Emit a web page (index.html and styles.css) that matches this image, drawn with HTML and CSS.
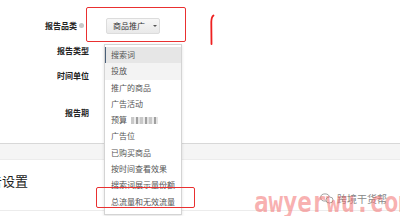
FILE: index.html
```html
<!DOCTYPE html>
<html lang="zh">
<head>
<meta charset="utf-8">
<link rel="stylesheet" href="styles.css">
</head>
<body>
<div class="page">
  <div class="form">
    <div class="row">
      <div class="label first">报告品类<span class="help"></span></div>
      <div class="field"><div class="select">商品推广<span class="caret"></span></div></div>
    </div>
    <div class="row"><div class="label">报告类型</div></div>
    <div class="row"><div class="label">时间单位</div></div>
    <div class="row last"><div class="label">报告期</div></div>
  </div>
  <div class="band"></div>
  <div class="section"><h2 class="title"><span class="cut">告</span>设置</h2></div>

  <ul class="menu">
    <li class="item active">搜索词</li>
    <li class="item hover">投放</li>
    <li class="item">推广的商品</li>
    <li class="item">广告活动</li>
    <li class="item">预算 <span class="mosaic"></span></li>
    <li class="item">广告位</li>
    <li class="item">已购买商品</li>
    <li class="item">按时间查看效果</li>
    <li class="item">搜索词展示量份额</li>
    <li class="item">总流量和无效流量</li>
  </ul>

  <div class="mark mark-top"></div>
  <div class="mark mark-bottom"></div>
  <svg class="stroke" width="8" height="32" viewBox="0 0 8 32"><path d="M3.5 30 L3.3 8 Q3.4 3 5.5 1.5" fill="none" stroke="#ee2020" stroke-width="1.8" stroke-linecap="round"/></svg>

  <div class="wechat">
    <svg class="wx" width="14" height="11" viewBox="0 0 14 11"><ellipse cx="5" cy="4.5" rx="4.3" ry="3.6" fill="none" stroke="#999" stroke-width="0.9"/><ellipse cx="9.5" cy="7" rx="3.6" ry="3" fill="#fff" stroke="#999" stroke-width="0.9"/></svg>
    <span>跨境干货帮</span>
  </div>
  <div class="watermark">awyerwu.com</div>
</div>
</body>
</html>
```
FILE: styles.css
```css
* { box-sizing: border-box; margin: 0; padding: 0; }
html, body { width: 400px; height: 216px; overflow: hidden; background: #fff; }
body { font-family: "Noto Sans CJK SC", "Noto Sans", sans-serif; color: #333; }
.page { position: relative; width: 400px; height: 216px; overflow: hidden; }

.form { height: 143px; padding-top: 13px; }
.row { display: flex; align-items: center; height: 25px; }
.row.last { margin-top: 12px; }
.label { width: 90px; text-align: right; font-size: 8px; font-weight: 700; color: #222; padding-right: 1px; display: flex; justify-content: flex-end; align-items: center; }
.label.first { padding-right: 6px; }
.help { display: inline-block; width: 5px; height: 5px; border-radius: 50%; background: #c8c8c8; margin-left: 2px; }
.field { padding-left: 16px; }
.select { display: flex; align-items: center; width: 54px; height: 16px; padding-left: 6px; font-size: 8px; color: #333; background: linear-gradient(#f7f7f7, #e9e9e9); border: 1px solid #dcdcdc; border-radius: 2px; }
.caret { width: 0; height: 0; border-left: 2px solid transparent; border-right: 2px solid transparent; border-top: 2px solid #555; margin-left: 8px; }

.band { height: 17px; background: #f5f5f5; border-top: 1px solid #d8d8d8; border-bottom: 1px solid #ececec; }
.section { height: 51px; border-bottom: 1px solid #ececec; padding-top: 12px; }
.title { font-size: 13px; font-weight: 400; color: #222; margin-left: -11px; line-height: 18px; }

.menu { position: absolute; left: 104px; top: 44px; width: 78px; list-style: none; background: #fff; border: 1px solid #d4d4d4; box-shadow: 0 1px 3px rgba(0,0,0,0.12); padding: 2px 0 4px; }
.item { height: 16.3px; line-height: 16.3px; font-size: 8px; color: #555; padding-left: 6px; white-space: nowrap; }
.item.active { background: #e6e6e6; box-shadow: inset 1px 0 0 #4a5f78; }
.item.hover { background: #f3f3f3; }
.mosaic { display: inline-block; width: 27px; height: 7px; vertical-align: -1px; margin-left: 2px; background: repeating-linear-gradient(90deg, #bbb 0 3px, #e8e8e8 3px 5px, #888 5px 7px, #ddd 7px 9px); opacity: 0.8; }

.mark { position: absolute; border: 1.5px solid #e93030; border-radius: 2px; }
.mark-top { left: 86px; top: 7px; width: 100px; height: 35px; }
.mark-bottom { left: 96px; top: 187px; width: 99px; height: 21px; }
.stroke { position: absolute; left: 208px; top: 14px; }

.wechat { position: absolute; left: 320px; top: 191px; display: flex; align-items: center; gap: 3px; font-size: 10px; color: #888; }
.watermark { position: absolute; left: 254px; top: 186px; font-family: "DejaVu Sans Mono", monospace; font-weight: 700; font-size: 24px; color: rgba(242, 110, 110, 0.55); transform: scaleY(1.2); transform-origin: left top; letter-spacing: 0; }
```
